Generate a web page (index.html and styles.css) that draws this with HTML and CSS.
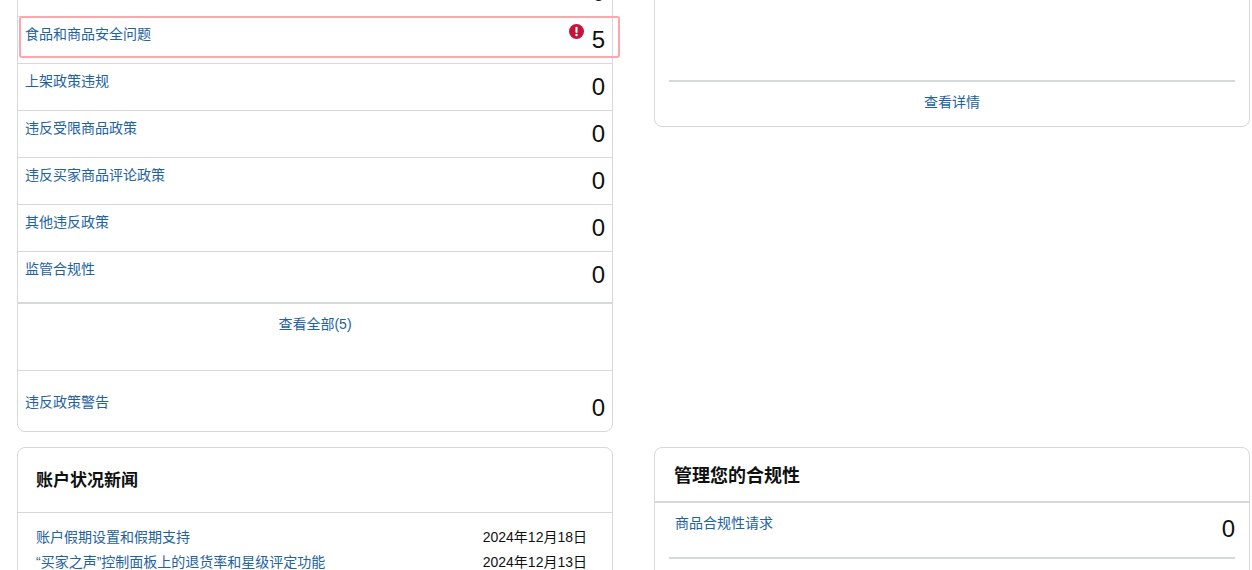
FILE: index.html
```html
<!DOCTYPE html>
<html lang="zh-CN">
<head>
<meta charset="utf-8">
<title>账户状况</title>
<link rel="stylesheet" href="styles.css">
</head>
<body>
<div class="page">
  <div class="col col-left">
    <section class="card policy">
      <div class="row"><span class="num">0</span></div>
      <div class="row row-alert"><a class="label" href="#">食品和商品安全问题</a>
        <svg class="alert" viewBox="0 0 16 16" aria-hidden="true"><circle cx="8" cy="8" r="8" fill="#c7123a"/><rect x="6.9" y="3" width="2.2" height="6.6" rx="1" fill="#fff"/><circle cx="8" cy="11.8" r="1.3" fill="#fff"/></svg>
        <span class="num">5</span></div>
      <div class="row"><a class="label" href="#">上架政策违规</a><span class="num">0</span></div>
      <div class="row"><a class="label" href="#">违反受限商品政策</a><span class="num">0</span></div>
      <div class="row"><a class="label" href="#">违反买家商品评论政策</a><span class="num">0</span></div>
      <div class="row"><a class="label" href="#">其他违反政策</a><span class="num">0</span></div>
      <div class="row row-last"><a class="label" href="#">监管合规性</a><span class="num">0</span></div>
      <div class="all"><a class="label" href="#">查看全部(5)</a></div>
      <div class="warn"><a class="label" href="#">违反政策警告</a><span class="num">0</span></div>
    </section>
    <section class="card news">
      <h2 class="news-title">账户状况新闻</h2>
      <ul class="news-list">
        <li class="news-item"><a class="label" href="#">账户假期设置和假期支持</a><span class="date">2024年12月18日</span></li>
        <li class="news-item"><a class="label" href="#">“买家之声”控制面板上的退货率和星级评定功能</a><span class="date">2024年12月13日</span></li>
      </ul>
    </section>
  </div>
  <div class="col col-right">
    <section class="card details">
      <div class="details-body"></div>
      <div class="details-foot"><a class="label" href="#">查看详情</a></div>
    </section>
    <section class="card manage">
      <h2 class="manage-title">管理您的合规性</h2>
      <div class="manage-row"><a class="label" href="#">商品合规性请求</a><span class="num">0</span></div>
    </section>
  </div>
</div>
</body>
</html>
```
FILE: styles.css
```css
html, body {
  margin: 0;
  padding: 0;
  height: 570px;
  overflow: hidden;
  background: #fff;
}
body {
  font-family: "Liberation Sans", "Noto Sans CJK SC", sans-serif;
  font-size: 14px;
  color: #0f1111;
}
.page {
  display: grid;
  grid-template-columns: 596px 596px;
  column-gap: 41px;
  padding-left: 17px;
  margin-top: -199px;
  align-items: start;
}
.col {
  display: flex;
  flex-direction: column;
  gap: 15px;
}
.card {
  box-sizing: border-box;
  border: 1px solid #d5d9d9;
  border-radius: 8px;
  background: #fff;
}
.label {
  color: #2162a1;
  text-decoration: none;
  line-height: 20px;
}
.num {
  font-size: 24px;
  line-height: 30px;
  color: #0f1111;
}
.policy {
  height: 631px;
  padding-top: 168px;
}
.row {
  position: relative;
  box-sizing: border-box;
  height: 47px;
  padding: 7px 7px 0;
  display: flex;
  justify-content: space-between;
  align-items: flex-start;
  border-bottom: 1px solid #d5d9d9;
}
.row .num {
  margin-top: 1px;
  margin-left: auto;
}
.row-alert::after {
  content: "";
  position: absolute;
  left: 1px;
  right: -8px;
  top: -1px;
  height: 42px;
  box-sizing: border-box;
  border: 2px solid #ffa5ab;
  border-radius: 3px;
}
.alert {
  position: absolute;
  right: 28px;
  top: 7px;
  width: 15px;
  height: 15px;
}
.row-last {
  height: 52px;
  border-bottom: 2px solid #d5d9d9;
}
.all {
  box-sizing: border-box;
  height: 67px;
  padding-top: 10px;
  text-align: center;
  border-bottom: 1px solid #d5d9d9;
}
.warn {
  box-sizing: border-box;
  height: 60px;
  padding: 21px 7px 0;
  display: flex;
  justify-content: space-between;
  align-items: flex-start;
}
.warn .num { margin-top: 1px; }
.news-title {
  margin: 0;
  box-sizing: border-box;
  height: 65px;
  padding: 21px 18px 0;
  font-size: 17px;
  line-height: 24px;
  font-weight: 700;
  color: #0f1111;
  border-bottom: 1px solid #d5d9d9;
}
.news-list {
  list-style: none;
  margin: 0;
  padding: 14px 25px 0 18px;
}
.news-item {
  display: flex;
  justify-content: space-between;
  height: 25px;
  line-height: 20px;
}
.date { line-height: 20px; }
.col-right .card { width: 596px; }
.details {
  height: 326px;
  padding: 0 14px;
}
.details-body { height: 278px; }
.details-foot {
  height: 44px;
  border-top: 2px solid #d5d9d9;
  padding-top: 10px;
  box-sizing: border-box;
  text-align: center;
}
.manage {
  margin-top: 305px;
  height: 300px;
}
.manage-title {
  margin: 0;
  box-sizing: border-box;
  height: 55px;
  padding: 16px 19px 0;
  font-size: 18px;
  line-height: 24px;
  font-weight: 700;
  color: #0f1111;
  border-bottom: 2px solid #d5d9d9;
}
.manage-row {
  box-sizing: border-box;
  height: 56px;
  margin: 0 14px;
  padding: 10px 0 0 6px;
  display: flex;
  justify-content: space-between;
  align-items: flex-start;
  border-bottom: 2px solid #d5d9d9;
}
.manage-row .num { margin-top: 1px; }
```
